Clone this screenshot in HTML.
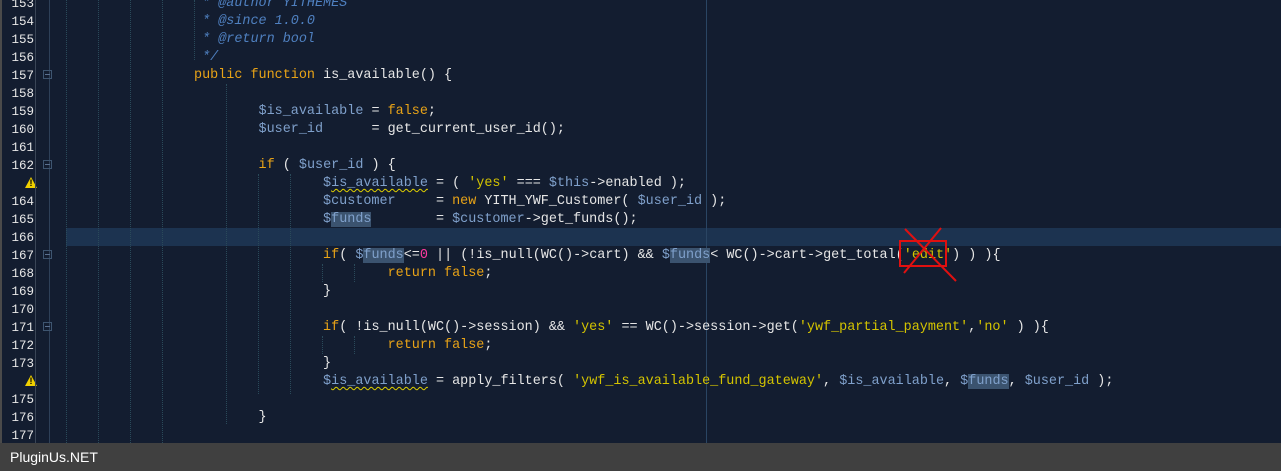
<!DOCTYPE html>
<html><head><meta charset="utf-8"><style>
body{margin:0;width:1281px;height:471px;overflow:hidden;background:#131d30;position:relative;font-family:"Liberation Mono",monospace}
.gut{position:absolute;left:0;top:0;width:36px;height:443px;border-left:2px solid #4a4a4a;box-sizing:border-box;border-right:1px solid #3a4556}
.ln{position:absolute;left:0;width:34px;text-align:right;font-family:"Liberation Mono",monospace;font-size:12.5px;color:#e8e8e8;height:18px;line-height:18px;margin-top:1px}
.code{position:absolute;left:65px;font-size:13.45px;color:#e6e6e6;white-space:pre;height:18px;line-height:18px;margin-top:2px}
.k{color:#e8a317}.v{color:#7fa0cb}.s{color:#d4c400}.c{color:#4f80c0;font-style:italic}.n{color:#ff3aa0}
.h{background:#3b536f}
.w{text-decoration:underline wavy #e0d000;text-decoration-thickness:1px;text-underline-offset:2px}
.g{position:absolute;top:0;height:443px;border-left:1px dotted #2a4a5a}
.fold{position:absolute;left:43px;width:9px;height:9px;border:1px solid #3e5570;box-sizing:border-box}
.fold:after{content:"";position:absolute;left:1px;top:3px;width:5px;height:1px;background:#5a7090}
.warn{position:absolute;left:25px;width:12px;height:11px;font:bold 9px "Liberation Sans",sans-serif;color:#000;text-align:center;line-height:13px}
.warn:before{content:"";position:absolute;left:0;top:0;border-left:6px solid transparent;border-right:6px solid transparent;border-bottom:11px solid #f0d000;z-index:-1}
.foot{position:absolute;left:0;top:443px;width:1281px;height:28px;background:#404040;color:#fff;font-family:"Liberation Sans",sans-serif;font-size:14px;line-height:28px;padding-left:10px;box-sizing:border-box}
</style></head><body>
<div style="position:absolute;left:66px;top:228px;width:1215px;height:18px;background:#1c3350"></div>
<div style="position:absolute;left:706px;top:0;width:1px;height:443px;background:#2a4563"></div>
<div class="gut"></div>
<div style="position:absolute;left:49px;top:0;width:1px;height:443px;background:#2e4058"></div>
<div class="g" style="left:66px"></div><div class="g" style="left:98px"></div><div class="g" style="left:130px"></div><div class="g" style="left:162px"></div>
<div class="g" style="left:194px;height:60px"></div>
<div class="g" style="left:226px;top:84px;height:340px"></div>
<div class="g" style="left:258px;top:174px;height:220px"></div>
<div class="g" style="left:290px;top:174px;height:220px"></div>
<div class="g" style="left:322px;top:264px;height:18px"></div><div class="g" style="left:354px;top:264px;height:18px"></div>
<div class="g" style="left:322px;top:336px;height:18px"></div><div class="g" style="left:354px;top:336px;height:18px"></div>

<div class="ln" style="top:-6px">153</div><div class="ln" style="top:12px">154</div><div class="ln" style="top:30px">155</div><div class="ln" style="top:48px">156</div><div class="ln" style="top:66px">157</div><div class="ln" style="top:84px">158</div><div class="ln" style="top:102px">159</div><div class="ln" style="top:120px">160</div><div class="ln" style="top:138px">161</div><div class="ln" style="top:156px">162</div><div class="ln" style="top:192px">164</div><div class="ln" style="top:210px">165</div><div class="ln" style="top:228px">166</div><div class="ln" style="top:246px">167</div><div class="ln" style="top:264px">168</div><div class="ln" style="top:282px">169</div><div class="ln" style="top:300px">170</div><div class="ln" style="top:318px">171</div><div class="ln" style="top:336px">172</div><div class="ln" style="top:354px">173</div><div class="ln" style="top:390px">175</div><div class="ln" style="top:408px">176</div><div class="ln" style="top:426px">177</div>
<div class="warn" style="top:177px">!</div><div class="warn" style="top:375px">!</div>
<div class="fold" style="top:70px"></div><div class="fold" style="top:160px"></div><div class="fold" style="top:250px"></div><div class="fold" style="top:322px"></div>

<div class="code c" style="top:-7px">                 * @author YITHEMES</div>
<div class="code c" style="top:11px">                 * @since 1.0.0</div>
<div class="code c" style="top:29px">                 * @return bool</div>
<div class="code c" style="top:47px">                 */</div>
<div class="code" style="top:65px">                <span class="k">public function</span> is_available() {</div>
<div class="code" style="top:101px">                        <span class="v">$is_available</span> = <span class="k">false</span>;</div>
<div class="code" style="top:119px">                        <span class="v">$user_id</span>      = get_current_user_id();</div>
<div class="code" style="top:155px">                        <span class="k">if</span> ( <span class="v">$user_id</span> ) {</div>
<div class="code" style="top:173px">                                <span class="v">$<span class="w">is_available</span></span> = ( <span class="s">'yes'</span> === <span class="v">$this</span>-&gt;enabled );</div>
<div class="code" style="top:191px">                                <span class="v">$customer</span>     = <span class="k">new</span> YITH_YWF_Customer( <span class="v">$user_id</span> );</div>
<div class="code" style="top:209px">                                <span class="v">$<span class="h">funds</span></span>        = <span class="v">$customer</span>-&gt;get_funds();</div>
<div class="code" style="top:245px">                                <span class="k">if</span>( <span class="v">$<span class="h">funds</span></span>&lt;=<span class="n">0</span> || (!is_null(WC()-&gt;cart) &amp;&amp; <span class="v">$<span class="h">funds</span></span>&lt; WC()-&gt;cart-&gt;get_total(<span class="s">'edit'</span>) ) ){</div>
<div class="code" style="top:263px">                                        <span class="k">return false</span>;</div>
<div class="code" style="top:281px">                                }</div>
<div class="code" style="top:317px">                                <span class="k">if</span>( !is_null(WC()-&gt;session) &amp;&amp; <span class="s">'yes'</span> == WC()-&gt;session-&gt;get(<span class="s">'ywf_partial_payment'</span>,<span class="s">'no'</span> ) ){</div>
<div class="code" style="top:335px">                                        <span class="k">return false</span>;</div>
<div class="code" style="top:353px">                                }</div>
<div class="code" style="top:371px">                                <span class="v">$<span class="w">is_available</span></span> = apply_filters( <span class="s">'ywf_is_available_fund_gateway'</span>, <span class="v">$is_available</span>, <span class="v">$<span class="h">funds</span></span>, <span class="v">$user_id</span> );</div>
<div class="code" style="top:407px">                        }</div>

<svg style="position:absolute;left:0;top:0" width="1281" height="443">
<rect x="900" y="241" width="46" height="25" fill="none" stroke="#e01010" stroke-width="2"/>
<line x1="904" y1="273" x2="941" y2="228" stroke="#e01010" stroke-width="2"/>
<line x1="905" y1="229" x2="956" y2="281" stroke="#e01010" stroke-width="2"/>
</svg>
<div class="foot">PluginUs.NET</div>
</body></html>
